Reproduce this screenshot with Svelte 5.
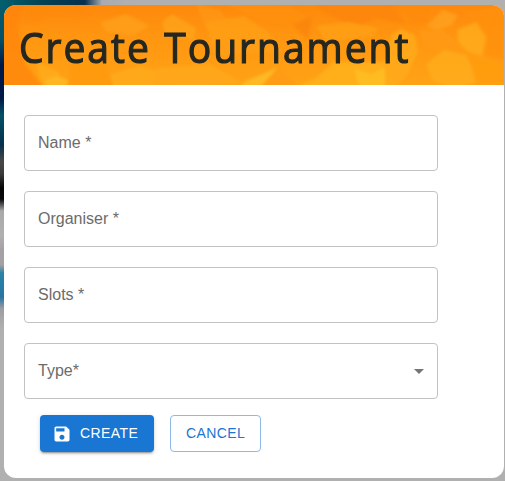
<script>
  const fields = [
    { label: 'Name *' },
    { label: 'Organiser *' },
    { label: 'Slots *' },
    { label: 'Type*', select: true }
  ];
</script>

<div class="backdrop">
  <div class="dialog">
    <header>
      <svg class="texture" viewBox="4 5 500 80" preserveAspectRatio="none" aria-hidden="true">
        <defs>
          <linearGradient id="base" x1="0" y1="0" x2="0" y2="1">
            <stop offset="0" stop-color="#fe890c" />
            <stop offset="0.45" stop-color="#ff9711" />
            <stop offset="1" stop-color="#ffa315" />
          </linearGradient>
          <filter id="soften"><feGaussianBlur stdDeviation="1.4" /></filter>
        </defs>
        <rect x="4" y="5" width="500" height="80" fill="url(#base)" />
        <g filter="url(#soften)" opacity=".75">
          <path d="M0 0H26L18 26 24 62 46 90H0Z" fill="#ff8507" />
          <path d="M26 0H100L84 18 52 14 36 24 20 20Z" fill="#fe8a0c" />
          <path d="M100 22 126 14 150 26 132 36 106 32Z" fill="#ffa01a" />
          <path d="M36 62 60 72 58 90H44Z" fill="#ffad1b" />
          <path d="M46 80 56 76 68 80 72 90H44Z" fill="#ffbd29" />
          <path d="M72 64 104 60 118 90H66Z" fill="#ff9810" />
          <path d="M110 74 140 66 160 72 152 90H114Z" fill="#ffad1c" />
          <path d="M162 22 172 14 196 28 194 40 166 36Z" fill="#ffa51e" />
          <path d="M196 4 220 10 232 28 206 30Z" fill="#ff9712" />
          <path d="M156 68 210 64 244 84 150 90Z" fill="#ffa91b" />
          <path d="M206 22 244 16 268 32 282 52 214 56Z" fill="#ffa018" />
          <path d="M244 82 278 67 262 90H240Z" fill="#ffc12b" />
          <path d="M278 67 292 80 300 90H258Z" fill="#ff9a12" />
          <path d="M226 4 290 6 306 16 292 26 262 22Z" fill="#ff9110" />
          <path d="M292 24 312 17 308 40Z" fill="#f98408" />
          <path d="M314 5 390 5 406 24 376 18 356 28 328 14Z" fill="#fc840a" />
          <path d="M316 26 348 22 378 28 374 36 326 42Z" fill="#ffa119" />
          <path d="M302 84 316 78 334 62 384 62 390 90H304Z" fill="#ffb41b" />
          <path d="M354 69 372 74 387 66 384 90H360Z" fill="#ffc628" />
          <path d="M392 34 401 29 415 35 418 52 408 74 394 90H386L384 60Z" fill="#ffac1c" />
          <path d="M412 26 430 22 424 10 408 14Z" fill="#ff8a0b" />
          <path d="M427 26 442 10 458 15 452 25 436 30Z" fill="#ffa321" />
          <path d="M420 30 444 30 462 50 448 54 424 48Z" fill="#ff9a17" />
          <path d="M426 64 444 50 466 55 478 82 452 88 432 80Z" fill="#ffae1b" />
          <path d="M457 30 476 22 486 37 482 56 468 52 458 42Z" fill="#ffae1c" />
          <path d="M462 12 504 5V60L484 56 487 36 476 22Z" fill="#ff910f" />
          <path d="M468 56 484 58 504 66V90H478Z" fill="#ff9c11" />
        </g>
      </svg>
      <h1>Create Tournament</h1>
    </header>
    <form onsubmit={(e) => e.preventDefault()}>
      {#each fields as field}
        <div class="field">
          <span>{field.label}</span>
          {#if field.select}
            <svg class="arrow" viewBox="0 0 24 24"><path d="M7 10l5 5 5-5z" /></svg>
          {/if}
        </div>
      {/each}
      <div class="actions">
        <button class="create" type="submit">
          <svg viewBox="0 0 24 24"><path d="M17 3H5c-1.11 0-2 .9-2 2v14c0 1.1.89 2 2 2h14c1.1 0 2-.9 2-2V7l-4-4zm-5 16c-1.66 0-3-1.34-3-3s1.34-3 3-3 3 1.34 3 3-1.34 3-3 3zm3-10H5V5h10v4z" /></svg>
          <span>CREATE</span>
        </button>
        <button class="cancel" type="button">CANCEL</button>
      </div>
    </form>
  </div>
</div>

<style>
  .backdrop {
    box-sizing: border-box;
    width: 505px;
    height: 481px;
    padding: 5px 1px 3px 4px;
    overflow: hidden;
    background:
      linear-gradient(90deg, #04606e 0, #034052 45px, #06304f 85px, #a9abb0 102px, #b1b0b1 130px) 0 0 / 100% 7px no-repeat,
      linear-gradient(#04606e 0, #045068 40px, #001848 65px, #001848 98px, #045068 115px, #07304c 145px, #484848 162px, #3a3a3a 174px, #050508 188px, #08080a 199px, #aaa9aa 211px, #b1b0b1 235px, #a5a0a4 250px, #a5a0a4 265px, #2984a8 273px, #2874a2 297px, #a09da2 309px, #b1b0b1 330px) 0 0 / 14px 100% no-repeat,
      #b1b0b1;
  }
  .dialog {
    height: 473px;
    border-radius: 12px;
    overflow: hidden;
    background: #fff;
  }
  header {
    display: grid;
    height: 80px;
  }
  .texture, h1 { grid-area: 1 / 1; }
  .texture {
    width: 500px;
    height: 80px;
  }
  h1 {
    z-index: 1;
    margin: 0;
    padding: 12px 0 0 15px;
    font: 400 42px/60px "Open Sans", "Noto Sans", sans-serif;
    letter-spacing: 2.1px;
    word-spacing: 1.5px;
    -webkit-text-stroke: 1.2px #252721;
    transform: scaleX(0.93);
    transform-origin: 15px 0;
    white-space: nowrap;
    color: #252721;
  }
  form {
    display: flex;
    flex-direction: column;
    gap: 20px;
    padding: 30px 66px 0 20px;
  }
  .field {
    box-sizing: border-box;
    display: flex;
    align-items: center;
    justify-content: space-between;
    height: 56px;
    padding: 0 6px 0 13px;
    border: 1px solid #c2c2c2;
    border-radius: 4px;
    font: 16px/24px "Liberation Sans", Arial, sans-serif;
    letter-spacing: 0;
    color: #6b6b6b;
  }
  .arrow {
    width: 24px;
    height: 24px;
    fill: #757575;
  }
  .actions {
    display: flex;
    gap: 16px;
    margin: -4px 0 0 16px;
  }
  button {
    box-sizing: border-box;
    display: flex;
    align-items: center;
    height: 37px;
    padding: 0 15px;
    border: 1px solid #8cbae8;
    border-radius: 4px;
    background: #fff;
    color: #1976d2;
    font: 14px/22px "Liberation Sans", Arial, sans-serif;
    letter-spacing: 0.4px;
    white-space: nowrap;
  }
  .cancel {
    width: 91px;
    padding-bottom: 2px;
  }
  .create {
    width: 114px;
    gap: 8px;
    padding: 0 12px;
    border: 0;
    background: #1976d2;
    color: #fff;
    box-shadow: 0 3px 1px -2px #0003, 0 2px 2px #00000024, 0 1px 5px #0000001f;
  }
  .create span { margin-top: -2px; }
  .create svg {
    flex: none;
    width: 20px;
    height: 20px;
    fill: #fff;
  }
</style>
